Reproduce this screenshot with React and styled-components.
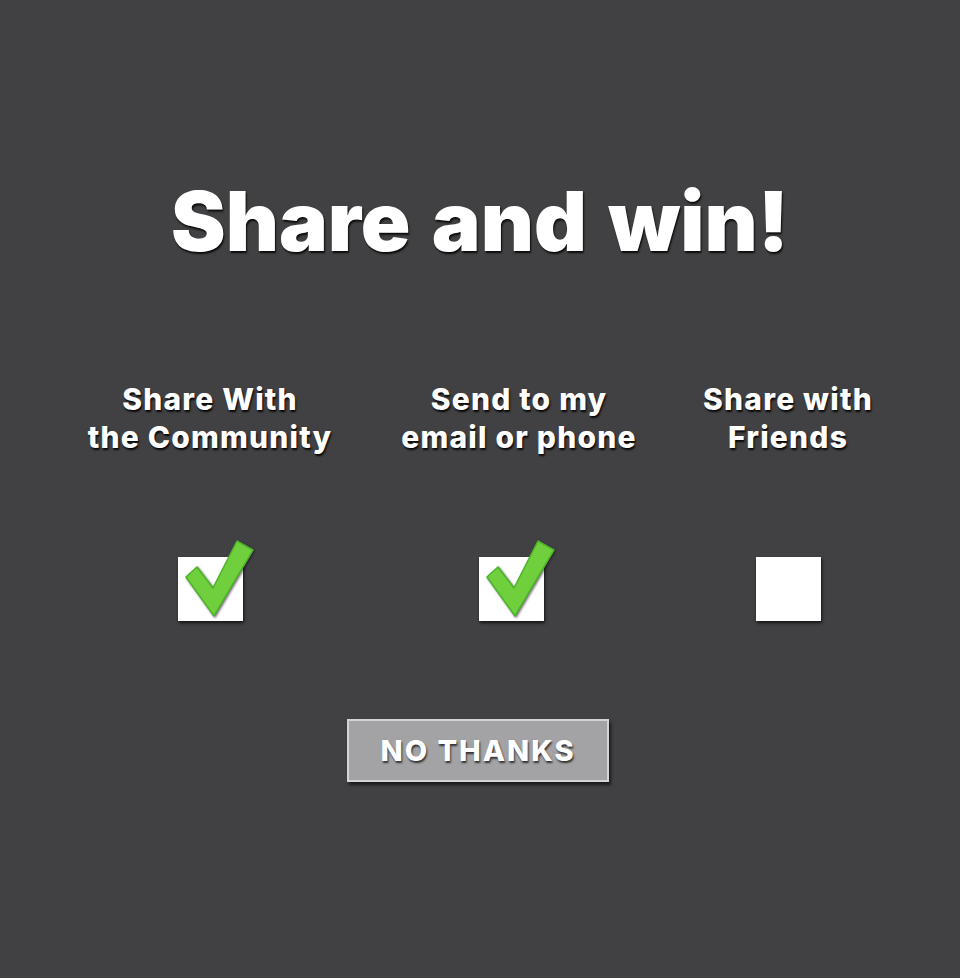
import React from "react";
import styled, { createGlobalStyle } from "styled-components";

const Global = createGlobalStyle`
  html, body { margin: 0; padding: 0; background: #414143; }
  body { font-family: Inter, "Noto Sans", sans-serif; }
`;

const Page = styled.div`
  min-height: 978px;
  background: #414143;
  display: flex;
  flex-direction: column;
  align-items: center;
  color: #fff;
`;

const Title = styled.h1`
  margin: 0;
  padding-top: 172px;
  font-family: Inter, sans-serif;
  font-weight: 900;
  font-size: 82px;
  line-height: 100px;
  letter-spacing: 0px;
  word-spacing: 5px;
  text-shadow: 1px 2px 2px rgba(0, 0, 0, 0.85);
`;

const Options = styled.div`
  margin-top: 108px;
  align-self: stretch;
  padding-left: 60px;
  display: grid;
  grid-template-columns: 300px 310px 236px;
  row-gap: 101px;
`;

const Label = styled.div`
  padding-left: ${(p) => p.$shift || 0}px;
  font-family: Inter, sans-serif;
  font-weight: 800;
  font-size: 30px;
  line-height: 38px;
  letter-spacing: 1.2px;
  text-align: center;
  text-shadow: 1px 2px 2px rgba(0, 0, 0, 0.9);
`;

const BoxCell = styled.div`
  display: flex;
  justify-content: center;
  padding-right: ${(p) => p.$shift || 0}px;
`;

const Box = styled.div`
  position: relative;
  width: 65px;
  height: 64px;
  background: #fff;
  box-shadow: 1px 2px 3px rgba(0, 0, 0, 0.7);
`;

const Check = styled.svg`
  position: absolute;
  left: 0;
  top: -20px;
  width: 80px;
  height: 84px;
  overflow: visible;
  filter: drop-shadow(1px 1px 1px rgba(30, 0, 40, 0.6));
`;

const Button = styled.button`
  margin-top: 98px;
  margin-right: 4px;
  width: 262px;
  height: 63px;
  background: #a3a3a5;
  border: 2px solid #d4d4d6;
  box-shadow: 2px 3px 3px rgba(0, 0, 0, 0.6);
  color: #fff;
  font-family: Inter, sans-serif;
  font-weight: 800;
  font-size: 29px;
  letter-spacing: 2px;
  text-shadow: 1px 2px 2px rgba(0, 0, 0, 0.7);
  padding: 0;
  cursor: pointer;
`;

const CheckBox = ({ checked, shift }) => (
  <BoxCell $shift={shift}>
    <Box>
      {checked && (
        <Check viewBox="0 -20 80 84">
          <polygon
            points="8,20 19,10 35,31 59,-16 75,-7 36,59"
            fill="#6fcf3d"
            stroke="#4bb526"
            strokeWidth="1.5"
            strokeLinejoin="round"
          />
        </Check>
      )}
    </Box>
  </BoxCell>
);

const items = [
  { lines: ["Share With", "the Community"], checked: true, shift: 0 },
  { lines: ["Send to my", "email or phone"], checked: true, shift: 8 },
  { lines: ["Share with", "Friends"], checked: false, shift: 0 },
];

export default function App() {
  return (
    <>
      <Global />
      <Page>
        <Title>Share and win!</Title>
        <Options>
          {items.map((it) => (
            <Label key={it.lines[0]} $shift={it.shift}>
              {it.lines[0]}
              <br />
              {it.lines[1]}
            </Label>
          ))}
          {items.map((it) => (
            <CheckBox key={"b" + it.lines[0]} checked={it.checked} shift={it.shift} />
          ))}
        </Options>
        <Button>NO THANKS</Button>
      </Page>
    </>
  );
}
